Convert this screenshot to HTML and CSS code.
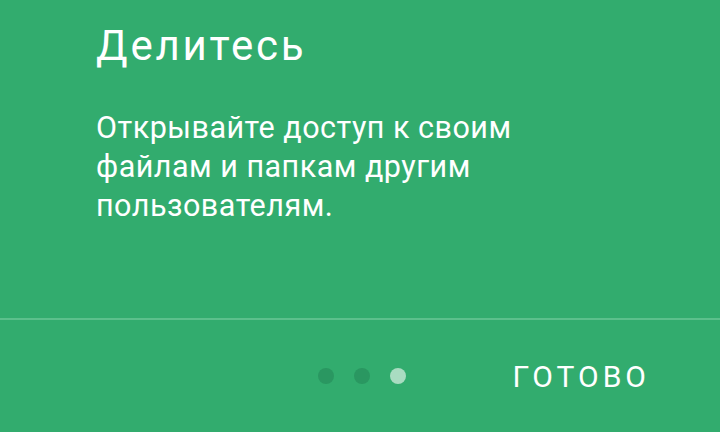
FILE: index.html
```html
<!DOCTYPE html>
<html lang="ru">
<head>
  <meta charset="UTF-8">
  <meta name="viewport" content="width=device-width, initial-scale=1.0">
  <title>Делитесь</title>
  <link rel="stylesheet" href="styles.css">
</head>
<body>
  <div class="screen">
    <div class="intro">
      <h1 class="intro-title">Делитесь</h1>
      <p class="intro-text">Открывайте доступ к своим файлам и папкам другим пользователям.</p>
    </div>
    <div class="footer">
      <div class="dots">
        <span class="dot"></span>
        <span class="dot"></span>
        <span class="dot active"></span>
      </div>
      <div class="done">ГОТОВО</div>
    </div>
  </div>
</body>
</html>
```

FILE: styles.css
```css
html, body {
  margin: 0;
  padding: 0;
}

body {
  background: #32ac6e;
  font-family: Roboto, "Noto Sans", sans-serif;
  color: #fff;
}

.screen {
  width: 720px;
  height: 432px;
  display: flex;
  flex-direction: column;
}

.intro {
  height: 320px;
  padding: 0 96px;
  box-sizing: border-box;
  border-bottom: 2px solid #5cc08c;
}

.intro-title {
  margin: 21px 0 0;
  font-size: 42px;
  font-weight: 400;
  line-height: 50px;
  letter-spacing: 2.8px;
}

.intro-text {
  margin: 37px 0 0;
  width: 460px;
  font-size: 30.5px;
  line-height: 39px;
  letter-spacing: 0.5px;
}

.footer {
  flex: 1;
  display: flex;
  align-items: center;
  padding-left: 318px;
  padding-right: 70px;
}

.dots {
  display: flex;
  gap: 20px;
}

.dot {
  width: 16px;
  height: 16px;
  border-radius: 50%;
  background: #2a9761;
}

.dot.active {
  background: #a9dcc1;
}

.done {
  margin-left: auto;
  font-size: 30px;
  letter-spacing: 4px;
}
```
